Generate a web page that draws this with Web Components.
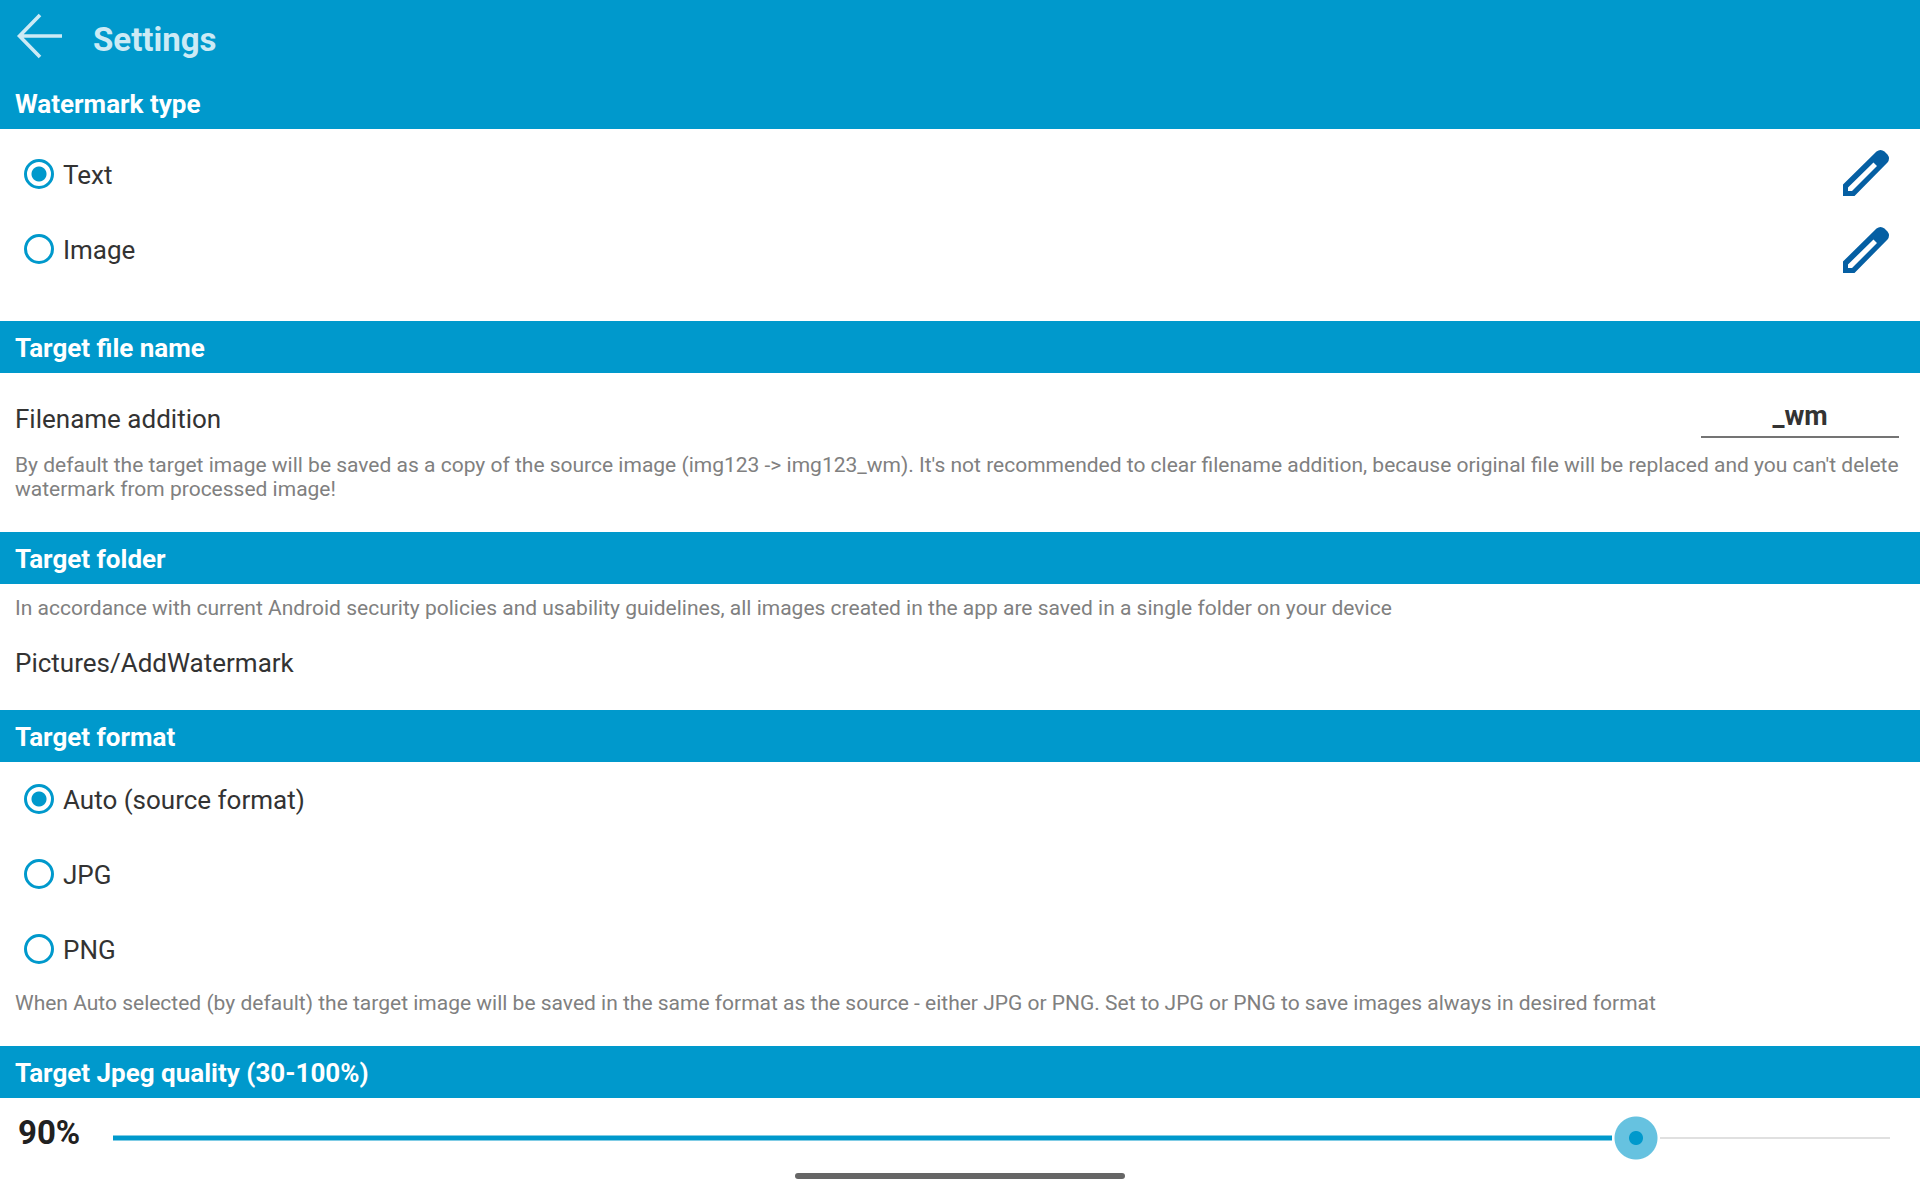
<!DOCTYPE html>
<html lang="en">
<head>
<meta charset="utf-8">
<meta name="viewport" content="width=device-width, initial-scale=1">
<title>Settings</title>
<style>
  html { --accent: #0099cc; --ink: #333333; --muted: #808080; }
  body { margin: 0; background: #ffffff; color: var(--ink); font-family: Roboto, "Noto Sans", sans-serif; font-size: 26px; line-height: 32px; }
</style>
</head>
<body>
<settings-page>
  <app-bar slot="bar">Settings</app-bar>

  <settings-section heading="Watermark type">
    <watermark-type></watermark-type>
  </settings-section>

  <settings-section heading="Target file name">
    <text-setting label="Filename addition" value="_wm"></text-setting>
    <hint-text class="after-field">By default the target image will be saved as a copy of the source image (img123 -&gt; img123_wm). It's not recommended to clear filename addition, because original file will be replaced and you can't delete watermark from processed image!</hint-text>
  </settings-section>

  <settings-section heading="Target folder">
    <hint-text class="lead">In accordance with current Android security policies and usability guidelines, all images created in the app are saved in a single folder on your device</hint-text>
    <path-value>Pictures/AddWatermark</path-value>
  </settings-section>

  <settings-section heading="Target format">
    <radio-list name="format" label="Target format" options="Auto (source format)|JPG|PNG"></radio-list>
    <hint-text class="after-list">When Auto selected (by default) the target image will be saved in the same format as the source - either JPG or PNG. Set to JPG or PNG to save images always in desired format</hint-text>
  </settings-section>

  <settings-section heading="Target Jpeg quality (30-100%)">
    <quality-slider min="30" max="100" value="90"></quality-slider>
  </settings-section>
</settings-page>

<script>
const define = (name, render, setup) => customElements.define(name, class extends HTMLElement {
  connectedCallback() {
    if (this.shadowRoot) return;
    this.attachShadow({ mode: 'open' }).innerHTML = render(this);
    if (setup) setup(this.shadowRoot, this);
  }
});

define('settings-page', () => `
  <style>
    :host { display: flex; flex-direction: column; min-height: 100vh; }
    main { display: flex; flex-direction: column; }
    .pill { position: fixed; bottom: 21px; left: 50%; width: 330px; height: 6px; margin-left: -165px; border-radius: 3px; background: #666666; }
  </style>
  <slot name="bar"></slot>
  <main><slot></slot></main>
  <div class="pill"></div>`);

define('app-bar', () => `
  <style>
    :host { display: block; background: var(--accent); color: #cceaf5; }
    header { display: flex; align-items: center; gap: 29px; height: 77px; padding: 0 15px; box-sizing: border-box; }
    button { display: flex; padding: 0 0 5px; border: 0; background: none; color: inherit; cursor: pointer; }
    h1 { margin: 0; padding-top: 3px; font-size: 33px; line-height: 40px; font-weight: 700; }
  </style>
  <header>
    <button aria-label="Back"><svg width="49" height="48" viewBox="0 0 49 48" fill="none" stroke="currentColor" stroke-width="3.6"><path d="M25 3 4.500 24 25 45M5 24H47"/></svg></button>
    <h1><slot></slot></h1>
  </header>`);

define('settings-section', el => `
  <style>
    :host { display: block; }
    h2 { margin: 0; padding: 11px 15px 9px; background: var(--accent); color: #ffffff; font-size: 26px; line-height: 32px; font-weight: 700; }
    div { display: flex; flex-direction: column; }
  </style>
  <section><h2>${el.getAttribute('heading')}</h2><div><slot></slot></div></section>`);

define('watermark-type', () => `
  <style>
    :host { display: flex; justify-content: space-between; align-items: flex-start; padding: 5px 30px 33px 0; }
    radio-list { padding-top: 3px; flex: 1; }
    .actions { display: flex; flex-direction: column; }
  </style>
  <radio-list name="type" label="Watermark type" options="Text|Image"></radio-list>
  <div class="actions"><edit-button label="Edit text"></edit-button><edit-button label="Edit image"></edit-button></div>`);

define('edit-button', el => `
  <style>
    :host { display: block; }
    button { display: flex; align-items: center; justify-content: center; height: 77px; padding: 0; border: 0; background: none; color: #055fa3; cursor: pointer; }
  </style>
  <button aria-label="${el.getAttribute('label')}"><svg width="48" height="48" viewBox="0 0 48 48"><path fill="currentColor" fill-rule="evenodd" d="M1 47V35.500L34.500 2.500Q38.500-.500 42.500 2.500L45.500 5.500Q48.500 9.500 45.500 13.500L12.500 47ZM6 42H10L35 17 31.500 13.500 6 38.500Z"/></svg></button>`);

define('radio-list', el => `
  <style>
    :host { display: block; }
    fieldset { display: flex; flex-direction: column; margin: 0; padding: 0; border: 0; min-width: 0; }
    label { display: flex; align-items: center; gap: 9px; height: 75px; padding: 0 0 1px 24px; box-sizing: border-box; cursor: pointer; }
    input { appearance: none; width: 30px; height: 30px; margin: 0; border: 3px solid var(--accent); border-radius: 50%; background: #ffffff; }
    input:checked { background: radial-gradient(circle, var(--accent) 7px, #ffffff 8px); }
    span { padding-top: 2px; }
  </style>
  <fieldset aria-label="${el.getAttribute('label')}">
    ${el.getAttribute('options').split('|').map((text, i) => `<label><input type="radio" name="${el.getAttribute('name')}"${i ? '' : ' checked'}><span>${text}</span></label>`).join('')}
  </fieldset>`);

define('text-setting', el => `
  <style>
    :host { display: flex; align-items: flex-end; justify-content: space-between; padding: 22px 21px 0 15px; }
    label { padding-bottom: 3px; }
    input { width: 198px; height: 43px; box-sizing: border-box; padding: 3px 0 2px; border: 0; border-bottom: 2px solid #747474; border-radius: 0; background: none; color: inherit; font: 700 27px/32px Roboto, "Noto Sans", sans-serif; text-align: center; outline: 0; }
  </style>
  <label for="field">${el.getAttribute('label')}</label>
  <input id="field" type="text" value="${el.getAttribute('value')}">`);

define('hint-text', () => `
  <style>
    :host { display: block; padding: 0 15px; color: var(--muted); font-size: 21px; line-height: 24px; }
    :host(.after-field) { padding-top: 15px; padding-bottom: 31px; }
    :host(.lead) { padding-top: 12px; }
    :host(.after-list) { padding-top: 4px; padding-bottom: 31px; }
    p { margin: 0; }
  </style>
  <p><slot></slot></p>`);

define('path-value', () => `
  <style>
    :host { display: block; padding: 27px 15px 31px; }
  </style>
  <slot></slot>`);

define('quality-slider', el => {
  const [min, max, value] = ['min', 'max', 'value'].map(n => el.getAttribute(n));
  return `
  <style>
    :host { display: flex; align-items: center; height: 80px; padding: 0 6px 0 18px; }
    label { width: 71px; padding-bottom: 10px; color: #212121; font-size: 33px; line-height: 40px; font-weight: 700; }
    input { appearance: none; flex: 1; min-width: 0; height: 48px; margin: 0; background: none; outline: 0; }
    input::-webkit-slider-runnable-track {
      height: 48px; padding: 0;
      background:
        linear-gradient(var(--accent), var(--accent)) 24px 50% / calc((100% - 48px) * var(--ratio)) 4px no-repeat,
        linear-gradient(#80cce5, #80cce5) 24px 50% / calc((100% - 48px) * var(--ratio)) 6px no-repeat,
        linear-gradient(#e0e0e0, #e0e0e0) 24px 50% / calc(100% - 48px) 2px no-repeat;
    }
    input::-webkit-slider-thumb {
      appearance: none; width: 48px; height: 48px; border: 0;
      background: radial-gradient(circle, var(--accent) 6.500px, #66c2e0 7.500px, #66c2e0 21px, #ffffff 22px);
    }
  </style>
  <label for="range"><output>${value}%</output></label>
  <input id="range" type="range" min="${min}" max="${max}" value="${value}">`;
}, root => {
  const input = root.querySelector('input');
  const sync = () => {
    input.style.setProperty('--ratio', (input.value - input.min) / (input.max - input.min));
    root.querySelector('output').textContent = input.value + '%';
  };
  input.addEventListener('input', sync);
  sync();
});
</script>
</body>
</html>
